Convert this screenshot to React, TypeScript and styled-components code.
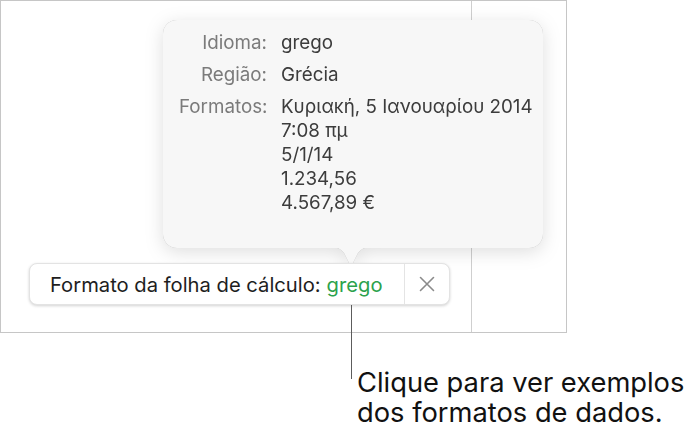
import React from "react";
import styled, { createGlobalStyle } from "styled-components";

const Global = createGlobalStyle`
  html, body { margin: 0; padding: 0; background: #ffffff; }
  body { font-family: Inter, "Noto Sans", "DejaVu Sans", sans-serif; -webkit-font-smoothing: antialiased; }
`;

const Figure = styled.div`
  position: relative;
  width: 697px;
  height: 438px;
  overflow: hidden;
`;

const Sheet = styled.div`
  width: 567px;
  height: 333px;
  box-sizing: border-box;
  border: 1px solid #c6c6c6;
  display: grid;
  grid-template-columns: 471px 1fr;
`;

const Column = styled.div<{ $divider?: boolean }>`
  border-right: ${(p) => (p.$divider ? "1px solid #cfcfcf" : "none")};
  background: #ffffff;
`;

const Bar = styled.div`
  position: absolute;
  left: 29px;
  top: 263px;
  width: 421px;
  height: 42px;
  box-sizing: border-box;
  display: flex;
  align-items: stretch;
  background: #ffffff;
  border: 1px solid #e3e3e3;
  border-radius: 8px;
  box-shadow: 0 1px 3px rgba(0, 0, 0, 0.18);
`;

const BarLabel = styled.div`
  flex: 1;
  display: flex;
  align-items: center;
  padding-left: 20px;
  font-size: 20.2px;
  color: #1e1e1e;
  white-space: nowrap;
`;

const Green = styled.span`
  color: #2ca24c;
  margin-left: 6px;
`;

const CloseButton = styled.div`
  width: 44px;
  border-left: 1px solid #e4e4e4;
  display: flex;
  align-items: center;
  justify-content: center;
`;

const PopoverWrap = styled.div`
  position: absolute;
  left: 163px;
  top: 20px;
  width: 380px;
  filter: drop-shadow(0 0 0.6px rgba(0, 0, 0, 0.28)) drop-shadow(0 4px 9px rgba(0, 0, 0, 0.13));
`;

const PopoverBox = styled.div`
  height: 228px;
  box-sizing: border-box;
  background: #f7f7f7;
  border-radius: 14px;
  padding: 11px 0 0 16px;
  display: grid;
  grid-template-columns: 88px auto;
  column-gap: 14px;
  row-gap: 8px;
  align-content: start;
  font-size: 18.8px;
  line-height: 24px;
`;

const Label = styled.div`
  color: #7b7b7b;
  text-align: right;
  white-space: nowrap;
`;

const Value = styled.div`
  color: #3c3c3c;
  white-space: nowrap;
`;

const Arrow = styled.svg`
  position: absolute;
  left: 168px;
  top: 227px;
  display: block;
`;

const Leader = styled.div`
  position: absolute;
  left: 350.5px;
  top: 305px;
  width: 1.5px;
  height: 74px;
  background: #5c5c5c;
`;

const Caption = styled.div`
  margin: 35px 0 0 357px;
  font-size: 27.3px;
  line-height: 30px;
  color: #111111;
  white-space: nowrap;
`;

export default function App() {
  return (
    <>
      <Global />
      <Figure>
        <Sheet>
          <Column $divider />
          <Column />
        </Sheet>

        <PopoverWrap>
          <PopoverBox>
            <Label>Idioma:</Label>
            <Value>grego</Value>
            <Label>Região:</Label>
            <Value>Grécia</Value>
            <Label>Formatos:</Label>
            <Value>
              Κυριακή, 5 Ιανουαρίου 2014
              <br />
              7:08 πμ
              <br />
              5/1/14
              <br />
              1.234,56
              <br />
              4.567,89 €
            </Value>
          </PopoverBox>
          <Arrow width="40" height="21" viewBox="0 0 40 21">
            <path d="M0 0 Q 9 0 13 6 L 18 16 Q 20 20 22 16 L 27 6 Q 31 0 40 0 Z" fill="#f7f7f7" />
          </Arrow>
        </PopoverWrap>

        <Bar>
          <BarLabel>
            Formato da folha de cálculo:<Green>grego</Green>
          </BarLabel>
          <CloseButton>
            <svg width="16" height="16" viewBox="0 0 16 16">
              <path d="M1.5 1.5 L14.5 14.5 M14.5 1.5 L1.5 14.5" stroke="#8b8b8b" strokeWidth="1.6" strokeLinecap="round" />
            </svg>
          </CloseButton>
        </Bar>

        <Leader />

        <Caption>
          Clique para ver exemplos
          <br />
          dos formatos de dados.
        </Caption>
      </Figure>
    </>
  );
}
